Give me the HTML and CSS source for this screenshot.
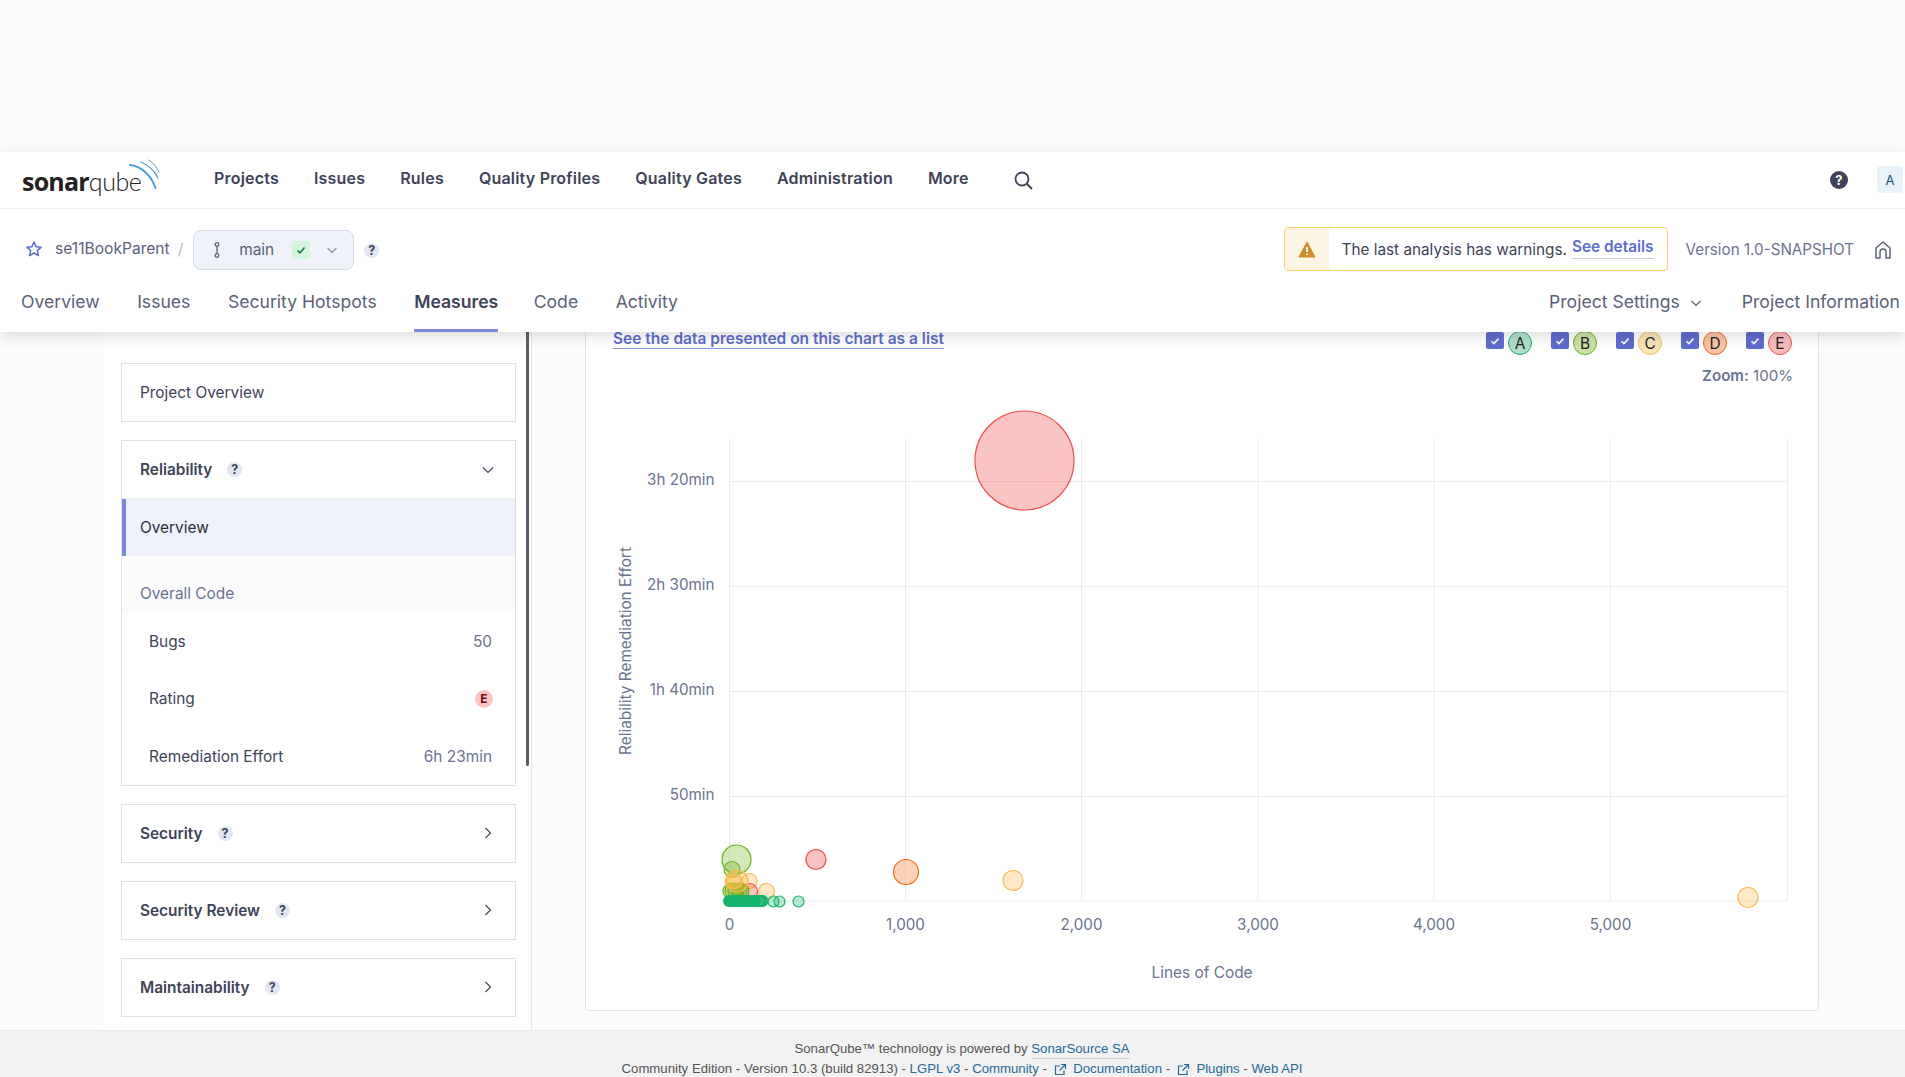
FILE: index.html
```html
<!DOCTYPE html>
<html lang="en">
<head>
<meta charset="UTF-8">
<meta name="viewport" content="width=device-width, initial-scale=1.0">
<title>Measures - se11BookParent</title>
<link rel="stylesheet" href="styles.css">
</head>
<body>
  <div class="top-strip"></div>

  <header class="page-header">
    <!-- Global navigation -->
    <nav class="global-nav">
      <a class="logo">
        <span class="logo-text"><b>sonar</b>qube</span>
        <svg class="logo-arcs" width="34" height="34" viewBox="0 0 34 34" fill="none" stroke="#4b9fd5" stroke-linecap="round">
          <path d="M3 8 C14 9 24 18 28.500 31" stroke-width="2"/>
          <path d="M14 5 C21 8 27 13 31 21" stroke-width="1.300"/>
          <path d="M22 3 C26 6 30 10 32 15" stroke-width="1"/>
        </svg>
      </a>
      <ul class="global-menu">
        <li>Projects</li>
        <li>Issues</li>
        <li>Rules</li>
        <li>Quality Profiles</li>
        <li>Quality Gates</li>
        <li>Administration</li>
        <li>More</li>
      </ul>
      <svg class="search-icon" width="20" height="20" viewBox="0 0 20 20" fill="none" stroke="#3e4357" stroke-width="1.800">
        <circle cx="9" cy="9" r="6.500"/>
        <path d="M14 14l4.500 4.500" stroke-linecap="round"/>
      </svg>
      <div class="global-right">
        <svg width="18" height="18" viewBox="0 0 18 18">
          <circle cx="9" cy="9" r="9" fill="#3e4357"/>
          <text x="9" y="13.500" class="help-mark">?</text>
        </svg>
        <span class="avatar">A</span>
      </div>
    </nav>

    <!-- Project row -->
    <div class="project-row">
      <svg class="star" width="18" height="18" viewBox="0 0 18 18" fill="none" stroke="#5d6cd0" stroke-width="1.500" stroke-linejoin="round">
        <path d="M9 2l2.100 4.700 5 .5-3.800 3.400 1.100 5L9 13l-4.400 2.600 1.100-5L1.900 7.200l5-.5z"/>
      </svg>
      <span class="project-name">se11BookParent</span>
      <span class="slash">/</span>
      <div class="branch-box">
        <svg width="10" height="18" viewBox="0 0 10 18" fill="none" stroke="#5a6178" stroke-width="1.300">
          <circle cx="5" cy="3.500" r="1.800"/>
          <circle cx="5" cy="14.500" r="1.800"/>
          <path d="M5 5.300v7.400"/>
        </svg>
        <span class="branch-name">main</span>
        <span class="branch-ok">
          <svg width="12" height="12" viewBox="0 0 12 12" fill="none" stroke="#0a7a3c" stroke-width="1.500"><path d="M2.500 6.500l2.400 2.400 4.600-5.400"/></svg>
        </span>
        <svg width="12" height="12" viewBox="0 0 12 12" fill="none" stroke="#8a93ab" stroke-width="1.200"><path d="M1.500 4l4.500 4.500L10.500 4"/></svg>
      </div>
      <span class="hint hint-branch">?</span>

      <div class="project-right">
        <div class="warning-box">
          <span class="warning-icon">
            <svg width="18" height="17" viewBox="0 0 18 17">
              <path d="M9 1L17 16H1z" fill="#d08f2a" stroke="#d08f2a" stroke-linejoin="round"/>
              <path d="M9 6v5M9 12.500v1.500" stroke="#fff" stroke-width="1.800"/>
            </svg>
          </span>
          <span class="warning-text">The last analysis has warnings.</span>
          <a class="warning-link">See details</a>
        </div>
        <span class="version">Version 1.0-SNAPSHOT</span>
        <svg width="18" height="20" viewBox="0 0 18 20" fill="none" stroke="#5a6178" stroke-width="1.500" stroke-linejoin="round">
          <path d="M2 18V8l7-6 7 6v10h-4v-6a3 3 0 0 0-6 0v6z"/>
        </svg>
      </div>
    </div>

    <!-- Project tabs -->
    <div class="tab-row">
      <a class="tab">Overview</a>
      <a class="tab">Issues</a>
      <a class="tab">Security Hotspots</a>
      <a class="tab tab-active">Measures</a>
      <a class="tab">Code</a>
      <a class="tab">Activity</a>
      <div class="tab-right">
        <a class="tab tab-settings">Project Settings
          <svg width="12" height="12" viewBox="0 0 12 12" fill="none" stroke="#5a6178" stroke-width="1.200"><path d="M1.500 4l4.500 4.500L10.500 4"/></svg>
        </a>
        <a class="tab">Project Information</a>
      </div>
    </div>
  </header>

  <main class="main">
    <!-- Side menu -->
    <aside class="sidebar">
      <div class="side-box side-link">Project Overview</div>

      <div class="side-box">
        <div class="side-head">
          <span class="side-title">Reliability</span>
          <span class="hint">?</span>
          <svg class="side-arrow" width="12" height="12" viewBox="0 0 12 12" fill="none" stroke="#3e4357" stroke-width="1.100"><path d="M1 3.500L6 8.500l5-5"/></svg>
        </div>
        <div class="side-current">Overview</div>
        <div class="side-group">Overall Code</div>
        <div class="side-metric"><span>Bugs</span><span class="metric-value">50</span></div>
        <div class="side-metric"><span>Rating</span><span class="rating-e">E</span></div>
        <div class="side-metric"><span>Remediation Effort</span><span class="metric-value">6h 23min</span></div>
      </div>

      <div class="side-box side-head">
        <span class="side-title">Security</span>
        <span class="hint">?</span>
        <svg class="side-arrow" width="12" height="12" viewBox="0 0 12 12" fill="none" stroke="#3e4357" stroke-width="1.100"><path d="M3.500 1l5 5-5 5"/></svg>
      </div>
      <div class="side-box side-head">
        <span class="side-title">Security Review</span>
        <span class="hint">?</span>
        <svg class="side-arrow" width="12" height="12" viewBox="0 0 12 12" fill="none" stroke="#3e4357" stroke-width="1.100"><path d="M3.500 1l5 5-5 5"/></svg>
      </div>
      <div class="side-box side-head">
        <span class="side-title">Maintainability</span>
        <span class="hint">?</span>
        <svg class="side-arrow" width="12" height="12" viewBox="0 0 12 12" fill="none" stroke="#3e4357" stroke-width="1.100"><path d="M3.500 1l5 5-5 5"/></svg>
      </div>
      <div class="side-scroll"></div>
    </aside>

    <!-- Bubble chart -->
    <section class="content">
      <div class="card">
        <div class="card-top">
          <a class="list-link">See the data presented on this chart as a list</a>
          <div class="legend">
            <span class="legend-item"><span class="check"><svg width="12" height="12" viewBox="0 0 12 12" fill="none" stroke="#fff" stroke-width="1.600"><path d="M2.500 6.200l2.400 2.400 4.600-5"/></svg></span><span class="rate rate-a">A</span></span>
            <span class="legend-item"><span class="check"><svg width="12" height="12" viewBox="0 0 12 12" fill="none" stroke="#fff" stroke-width="1.600"><path d="M2.500 6.200l2.400 2.400 4.600-5"/></svg></span><span class="rate rate-b">B</span></span>
            <span class="legend-item"><span class="check"><svg width="12" height="12" viewBox="0 0 12 12" fill="none" stroke="#fff" stroke-width="1.600"><path d="M2.500 6.200l2.400 2.400 4.600-5"/></svg></span><span class="rate rate-c">C</span></span>
            <span class="legend-item"><span class="check"><svg width="12" height="12" viewBox="0 0 12 12" fill="none" stroke="#fff" stroke-width="1.600"><path d="M2.500 6.200l2.400 2.400 4.600-5"/></svg></span><span class="rate rate-d">D</span></span>
            <span class="legend-item"><span class="check"><svg width="12" height="12" viewBox="0 0 12 12" fill="none" stroke="#fff" stroke-width="1.600"><path d="M2.500 6.200l2.400 2.400 4.600-5"/></svg></span><span class="rate rate-e">E</span></span>
          </div>
        </div>
        <div class="zoom-line"><b>Zoom:</b> 100%</div>

        <svg class="chart" width="1232" height="620" viewBox="586 390 1232 620">
          <g class="grid">
            <path d="M729.500 439V901M905.500 439V901M1081.500 439V901M1258 439V901M1434 439V901M1610.500 439V901M1787.500 439V901"/>
            <path d="M729.500 481.500H1787.500M729.500 586.500H1787.500M729.500 691.500H1787.500M729.500 796.500H1787.500M729.500 901H1787.500"/>
          </g>

          <g class="tick tick-y">
            <text x="714.500" y="485">3h 20min</text>
            <text x="714.500" y="590">2h 30min</text>
            <text x="714.500" y="695">1h 40min</text>
            <text x="714.500" y="800">50min</text>
          </g>
          <g class="tick tick-x">
            <text x="729.500" y="930">0</text>
            <text x="905.500" y="930">1,000</text>
            <text x="1081.500" y="930">2,000</text>
            <text x="1258" y="930">3,000</text>
            <text x="1434" y="930">4,000</text>
            <text x="1610.500" y="930">5,000</text>
          </g>
          <text class="axis-title" x="1202" y="978">Lines of Code</text>
          <text class="axis-title" transform="translate(631 651) rotate(-90)">Reliability Remediation Effort</text>

          <circle class="bub-e" cx="1024.500" cy="460.500" r="49.500"/>
          <circle class="bub-e" cx="816" cy="859.500" r="10"/>
          <circle class="bub-d" cx="906" cy="872" r="12.500"/>
          <circle class="bub-c" cx="1013" cy="880.500" r="10"/>
          <circle class="bub-c" cx="1748" cy="897.500" r="10"/>

          <circle class="bub-b" cx="736.500" cy="859.500" r="14.500"/>
          <circle class="bub-b" cx="732" cy="869.500" r="8"/>
          <circle class="bub-c" cx="749.500" cy="881" r="7.500"/>
          <circle class="bub-e" cx="749.500" cy="891.500" r="8"/>
          <circle class="bub-c" cx="766.500" cy="891.500" r="8"/>
          <circle class="bub-b" cx="731" cy="891" r="8"/>
          <circle class="bub-b" cx="733" cy="891" r="8"/>
          <circle class="bub-b" cx="736" cy="891" r="8"/>
          <circle class="bub-b" cx="739" cy="891" r="8"/>
          <circle class="bub-b" cx="741" cy="891" r="8"/>
          <circle class="bub-c" cx="733" cy="881" r="7.500"/>
          <circle class="bub-c" cx="735" cy="881" r="7.500"/>
          <circle class="bub-c" cx="737" cy="881" r="11"/>

          <circle class="bub-a" cx="798.500" cy="901.500" r="5.500"/>
          <circle class="bub-a" cx="779.500" cy="901.500" r="5.500"/>
          <circle class="bub-a" cx="773.500" cy="901.500" r="5.500"/>
          <circle class="bub-a" cx="762.500" cy="901" r="5.500"/>
          <circle class="bub-a" cx="761.500" cy="901" r="5.500"/>
          <circle class="bub-a" cx="760.500" cy="901" r="5.500"/>
          <circle class="bub-a" cx="759.500" cy="901" r="5.500"/>
          <circle class="bub-a" cx="758.500" cy="901" r="5.500"/>
          <rect class="bub-bar" x="723" y="895" width="38" height="12" rx="6"/>
        </svg>
      </div>
    </section>
  </main>

  <footer class="footer">
    <div>SonarQube™ technology is powered by <a class="footer-link footer-under">SonarSource SA</a></div>
    <div>Community Edition - Version 10.3 (build 82913) - <a class="footer-link">LGPL v3</a> - <a class="footer-link">Community</a> -
      <svg class="ext" width="13" height="13" viewBox="0 0 13 13" fill="none" stroke="#236a97" stroke-width="1.200"><path d="M10 7.500V11.500H1.500V3H6M7 1.500h4.500V6M11.500 1.500L5.500 7.500"/></svg>
      <a class="footer-link">Documentation</a> -
      <svg class="ext" width="13" height="13" viewBox="0 0 13 13" fill="none" stroke="#236a97" stroke-width="1.200"><path d="M10 7.500V11.500H1.500V3H6M7 1.500h4.500V6M11.500 1.500L5.500 7.500"/></svg>
      <a class="footer-link">Plugins</a> - <a class="footer-link">Web API</a></div>
  </footer>
</body>
</html>
```

FILE: styles.css
```css
* {
  box-sizing: border-box;
}

html, body {
  margin: 0;
  height: 100%;
}

body {
  display: flex;
  flex-direction: column;
  height: 100vh;
  overflow: hidden;
  background-color: #fcfcfc;
  color: #3e4357;
  font-family: Inter, "Noto Sans", sans-serif;
  font-size: 15.400px;
}

.top-strip {
  height: 152px;
  flex: none;
}

.page-header {
  position: relative;
  z-index: 2;
  flex: none;
  height: 180px;
  background-color: #fff;
  box-shadow: 0 4px 14px rgba(0, 0, 0, 0.14);
}

/* global nav */
.global-nav {
  display: flex;
  align-items: center;
  height: 57px;
  padding: 0 0 1px 22px;
  border-bottom: 1px solid #eeeff2;
}

.logo {
  display: flex;
  align-items: center;
  width: 192px;
  flex: none;
  position: relative;
}

.logo-text {
  font-family: Lato, sans-serif;
  font-size: 25px;
  letter-spacing: -0.4px;
  font-weight: 300;
  color: #222;
  line-height: 30px;
  margin-top: 3px;
}

.logo-text b {
  font-family: "Open Sans", sans-serif;
  font-weight: 700;
  letter-spacing: -0.8px;
}

.logo-arcs {
  position: absolute;
  left: 105px;
  top: -6px;
}

.global-menu {
  display: flex;
  gap: 35px;
  list-style: none;
  margin: -3px 0 0;
  padding: 0;
  font-size: 16px;
  font-weight: 600;
  letter-spacing: 0.2px;
  color: #3e4357;
}

.search-icon {
  margin-left: 44px;
}

.global-right {
  display: flex;
  align-items: center;
  gap: 29px;
  margin-left: auto;
  padding-right: 2px;
}

.help-mark {
  fill: #fff;
  font-size: 13px;
  font-weight: 700;
  text-anchor: middle;
}

.avatar {
  display: flex;
  align-items: center;
  justify-content: center;
  width: 26px;
  height: 27px;
  border-radius: 3px;
  background-color: #e8f3fa;
  color: #1f4a6b;
  font-size: 13px;
}

/* project row */
.project-row {
  display: flex;
  align-items: center;
  height: 81px;
  padding: 0 5px 0 25px;
}

.star {
  margin: -1px 12px 0 0;
}

.project-name {
  margin-top: -2px;
  color: #5a6178;
  font-size: 15.600px;
}

.slash {
  margin: 0 8px;
  color: #b4b9c8;
}

.branch-box {
  display: flex;
  align-items: center;
  width: 161px;
  height: 40px;
  padding-left: 18px;
  margin-left: 2px;
  background-color: #eff2f9;
  border: 1px solid #d5d9e8;
  border-radius: 8px;
}

.branch-name {
  margin-left: 17px;
  color: #5a6178;
}

.branch-ok {
  display: flex;
  align-items: center;
  justify-content: center;
  width: 18px;
  height: 18px;
  margin: 0 16px 0 18px;
  background-color: #d4f5de;
  border-radius: 2px;
}

.hint {
  display: inline-flex;
  align-items: center;
  justify-content: center;
  width: 15px;
  height: 15px;
  border-radius: 50%;
  background-color: #e1e6f3;
  color: #3e4357;
  font-size: 12.500px;
  font-weight: 700;
}

.hint-branch {
  margin-left: 10px;
  margin-top: 2px;
}

.project-right {
  display: flex;
  align-items: center;
  margin-left: auto;
  padding-right: 8px;
}

.warning-box {
  display: flex;
  align-items: center;
  width: 384px;
  height: 44px;
  border: 1px solid #f8d26c;
  border-radius: 4px;
  margin-top: -1px;
  overflow: hidden;
}

.warning-icon {
  display: flex;
  align-items: center;
  justify-content: center;
  width: 44px;
  height: 100%;
  background-color: #fdf5e4;
}

.warning-text {
  margin-left: 13px;
  color: #3e4357;
  font-size: 15.300px;
}

.warning-link {
  margin-left: 5px;
  margin-top: -2px;
  color: #5d6cd0;
  font-weight: 600;
  border-bottom: 1px solid #c6cbf0;
  padding-bottom: 2px;
}

.version {
  margin: 0 20px 0 18px;
  color: #6a7390;
  font-size: 15.200px;
}

/* tabs */
.tab-row {
  display: flex;
  align-items: stretch;
  height: 42px;
  padding: 0 5px 0 21px;
  gap: 37.500px;
  font-size: 17.600px;
}

.tab {
  display: flex;
  align-items: flex-start;
  color: #5a6178;
  line-height: 24px;
}

.tab-active {
  margin-right: -2px;
  color: #3e4357;
  font-weight: 600;
  border-bottom: 3px solid #7b87d9;
}

.tab-right {
  display: flex;
  margin-left: auto;
  gap: 40px;
}

.tab-settings svg {
  margin: 7px 0 0 10px;
}

/* main area */
.main {
  flex: 1;
  display: flex;
  min-height: 0;
  padding-left: 103px;
  overflow: hidden;
}

.sidebar {
  position: relative;
  flex: none;
  display: flex;
  flex-direction: column;
  gap: 18px;
  width: 429px;
  padding: 31px 15px 0 18px;
  background-color: #fff;
  border-right: 1px solid #e1e6f3;
}

.side-scroll {
  position: absolute;
  top: 0;
  right: 2px;
  width: 3px;
  height: 434px;
  background-color: #5c5f68;
  border-radius: 0 0 2px 2px;
}

.side-box {
  flex: none;
  background-color: #fff;
  border: 1px solid #e0e0e0;
}

.side-link {
  display: flex;
  align-items: center;
  height: 59px;
  padding-left: 18px;
}

.side-head {
  display: flex;
  align-items: center;
  height: 59px;
  padding: 0 21px 0 18px;
}

.side-box > .side-head {
  height: 58px;
  border-bottom: 1px solid #eeeff2;
}

.side-title {
  font-weight: 600;
  margin-right: 15px;
}

.side-arrow {
  margin-left: auto;
}

.side-current {
  display: flex;
  align-items: center;
  height: 57px;
  padding-left: 14px;
  background-color: #eef1f9;
  border-left: 4px solid #7b87d9;
  color: #2d3040;
}

.side-group {
  height: 57px;
  padding: 29px 0 0 18px;
  background-color: #fbfbfb;
  color: #6a7390;
  line-height: 18px;
}

.side-metric {
  display: flex;
  align-items: center;
  justify-content: space-between;
  height: 57.300px;
  padding: 0 23px 0 27px;
}

.metric-value {
  color: #6a7390;
}

.rating-e {
  display: flex;
  align-items: center;
  justify-content: center;
  width: 18px;
  height: 18px;
  margin-right: -1px;
  border-radius: 50%;
  background-color: #fdc4c4;
  color: #6e1414;
  font-size: 12px;
  font-weight: 700;
}

/* chart card */
.content {
  flex: 1;
  min-width: 0;
  padding: 0 86px 0 53px;
}

.card {
  height: 689px;
  margin-top: -10px;
  background-color: #fff;
  border: 1px solid #e1e6f3;
  border-radius: 4px;
}

.card-top {
  display: flex;
  justify-content: space-between;
  height: 42.500px;
  padding: 0 16px 0 27px;
}

.list-link {
  align-self: flex-start;
  color: #5d6cd0;
  font-size: 15.500px;
  font-weight: 600;
  line-height: 12px;
  margin-top: 10px;
  padding-bottom: 3px;
  border-bottom: 1px solid #8a96e8;
}

.legend {
  display: flex;
  gap: 9px;
}

.legend-item {
  display: flex;
  align-items: flex-start;
  width: 56px;
  gap: 4px;
  padding-top: 8px;
}

.check {
  display: flex;
  align-items: center;
  justify-content: center;
  width: 18px;
  height: 17px;
  margin-top: 1px;
  background-color: #5d6cd0;
  border-radius: 2px;
}

.rate {
  display: flex;
  align-items: center;
  justify-content: center;
  width: 24px;
  height: 24px;
  border: 1px solid;
  border-radius: 50%;
  color: #222;
  font-size: 15.400px;
}

.rate-a { background-color: #b0dfca; border-color: #18b46d; }
.rate-b { background-color: #c9e0a8; border-color: #6cb31c; }
.rate-c { background-color: #f9e4b8; border-color: #f5c05e; }
.rate-d { background-color: #fac3a4; border-color: #f56a13; }
.rate-e { background-color: #f7bcbc; border-color: #f44b4b; }

.zoom-line {
  text-align: right;
  padding-right: 25px;
  color: #6a7390;
  font-size: 15.100px;
  line-height: 20px;
}

.zoom-line b {
  font-weight: 600;
}

.chart {
  display: block;
  margin-top: 4px;
}

.grid path {
  fill: none;
  stroke: #ececee;
  stroke-width: 1;
}

.tick text {
  fill: #6a7390;
  font-size: 15.200px;
}

.tick-y text {
  text-anchor: end;
}

.tick-x text,
.axis-title {
  text-anchor: middle;
}

.axis-title {
  fill: #6a7390;
  font-size: 15.400px;
}

.bub-a { fill: #18b46d; fill-opacity: 0.3; stroke: #18b46d; stroke-width: 1.200; }
.bub-b { fill: #6cb31c; fill-opacity: 0.3; stroke: #6cb31c; stroke-width: 1.200; }
.bub-c { fill: #fdb94c; fill-opacity: 0.3; stroke: #fdb94c; stroke-width: 1.200; }
.bub-d { fill: #f56a13; fill-opacity: 0.3; stroke: #f56a13; stroke-width: 1.200; }
.bub-e { fill: #f44b4b; fill-opacity: 0.33; stroke: #f44b4b; stroke-width: 1.200; }
.bub-bar { fill: #15b36b; }

/* footer */
.footer {
  flex: none;
  height: 47px;
  padding: 8px 0 0 19px;
  background-color: #f2f2f2;
  border-top: 1px solid #e8e8e8;
  color: #555;
  font-family: "Liberation Sans", Arial, sans-serif;
  font-size: 13.200px;
  line-height: 20px;
  text-align: center;
}

.footer-link {
  color: #236a97;
}

.footer-under {
  border-bottom: 1px solid #c5d5e0;
  padding-bottom: 2px;
}

.ext {
  vertical-align: -3px;
  margin: 0 3px;
}
```
